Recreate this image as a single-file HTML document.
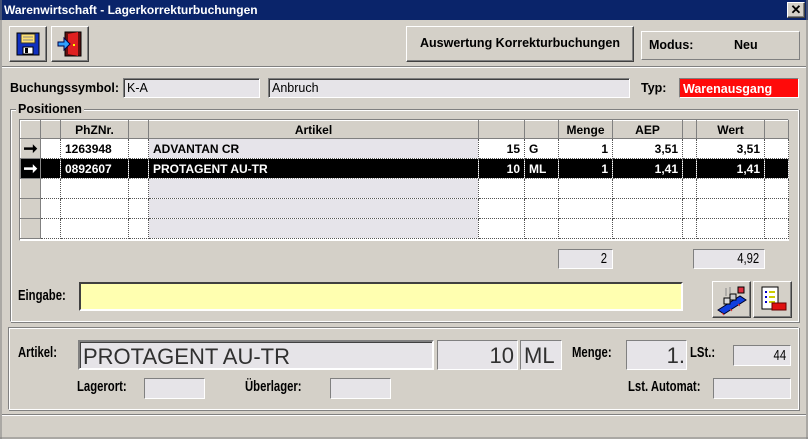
<!DOCTYPE html>
<html><head><meta charset="utf-8"><style>
*{margin:0;padding:0;box-sizing:border-box}
body{width:808px;height:439px;background:#d4d0c8;font-family:"Liberation Sans",Arial,sans-serif;font-size:12px;font-weight:bold;color:#000;position:relative;overflow:hidden}
.a{position:absolute}
.sunk{border:1px solid;border-color:#808080 #fff #fff #808080;background:#e6e4e8}
.sunk2{border:2px solid;border-color:#808080 #fff #fff #808080;box-shadow:inset 1px 1px 0 #404040}
.raised{border:1px solid;border-color:#fff #404040 #404040 #fff;box-shadow:inset -1px -1px 0 #808080;background:#d4d0c8}
.lbl{position:absolute;white-space:nowrap}
.n{display:inline-block;transform:scaleX(.78);transform-origin:left;font-size:14.5px}
table{border-collapse:collapse;position:absolute;left:20px;top:120px;table-layout:fixed}
td{height:20px;border-right:1px dotted #555;border-bottom:1px dotted #555;padding:0 4px;white-space:nowrap;overflow:hidden;font-size:12px}
tr.h td{background:#d4d0c8;border:1px solid;border-color:#fff #808080 #808080 #fff;text-align:center;height:18px}
td.ind{background:#d4d0c8;border:1px solid;border-color:#fff #808080 #808080 #fff;text-align:center;font-size:17px;line-height:14px;padding:0}
td.r{text-align:right}
td.lav{background:#e6e4ea}
tr.sel td{background:#000;color:#fff;border-color:#888}
tr.sel td.ind{background:#000;color:#fff}
</style></head><body>
<div class="a" style="left:0;top:0;width:808px;height:20px;background:#0a246a;color:#fff;font-size:12px;padding:3px 4px">Warenwirtschaft - Lagerkorrekturbuchungen</div>
<div class="a raised" style="left:787px;top:2px;width:18px;height:16px;text-align:center;font-size:13px;line-height:13px">✕</div>

<div class="a raised" style="left:9px;top:26px;width:38px;height:36px"></div>
<svg class="a" style="left:15px;top:31px" width="26" height="26" viewBox="0 0 26 26"><rect x="2" y="2" width="22" height="22" fill="#1030c0" stroke="#000"/><rect x="6" y="3" width="14" height="9" fill="#ffe070" stroke="#333"/><line x1="8" y1="6" x2="18" y2="6" stroke="#888"/><line x1="8" y1="9" x2="18" y2="9" stroke="#888"/><rect x="8" y="16" width="10" height="7" fill="#fff" stroke="#000"/><rect x="10" y="17" width="3" height="5" fill="#000"/></svg>
<div class="a raised" style="left:51px;top:26px;width:38px;height:36px"></div>
<svg class="a" style="left:56px;top:30px" width="28" height="28" viewBox="0 0 28 28"><rect x="9" y="2" width="16" height="24" fill="#601010" stroke="#000"/><polygon points="12,4 22,2 22,26 12,24" fill="#e02020"/><polygon points="2,12 8,12 8,8 14,14 8,20 8,16 2,16" fill="#30a0ff" stroke="#004"/><rect x="17" y="14" width="2" height="2" fill="#ff0"/></svg>

<div class="a raised" style="left:406px;top:26px;width:228px;height:36px;text-align:center;line-height:33px;font-size:12.5px">Auswertung Korrekturbuchungen</div>
<div class="a" style="left:641px;top:31px;width:159px;height:29px;border:1px solid;border-color:#fff #808080 #808080 #fff;line-height:26px;font-size:12.5px"><span style="margin-left:7px">Modus:</span><span style="position:absolute;left:92px">Neu</span></div>

<div class="a" style="left:2px;top:66px;width:804px;height:1px;background:#808080;box-shadow:0 1px 0 #fff"></div>

<div class="lbl" style="left:10px;top:81px;font-size:12.5px">Buchungssymbol:</div>
<div class="a sunk" style="left:123px;top:78px;width:137px;height:20px;font-weight:normal;padding:2px 3px;font-size:12.5px;box-shadow:inset 1px 1px 0 #404040">K-A</div>
<div class="a sunk" style="left:268px;top:78px;width:362px;height:20px;font-weight:normal;padding:2px 3px;font-size:12.5px;box-shadow:inset 1px 1px 0 #404040">Anbruch</div>
<div class="lbl" style="left:641px;top:81px;font-size:12.5px">Typ:</div>
<div class="a" style="left:679px;top:78px;width:120px;height:20px;background:#ff0a0a;color:#fff;padding:3px 3px;border:1px solid;border-color:#808080 #fff #fff #808080;font-size:12.5px">Warenausgang</div>

<div class="a" style="left:10px;top:109px;width:789px;height:213px;border:1px solid;border-color:#808080 #fff #fff #808080;box-shadow:inset 1px 1px 0 #fff,1px 1px 0 #808080"></div>
<div class="lbl" style="left:16px;top:102px;background:#d4d0c8;padding:0 2px;font-size:12.5px">Positionen</div>
<div class="a" style="left:19px;top:119px;width:770px;height:122px;background:#fff;border:1px solid;border-color:#808080 #fff #fff #808080"></div>
<table>
<colgroup><col style="width:20px"><col style="width:20px"><col style="width:68px"><col style="width:20px"><col style="width:330px"><col style="width:46px"><col style="width:34px"><col style="width:54px"><col style="width:70px"><col style="width:14px"><col style="width:68px"><col style="width:24px"></colgroup>
<tr class="h"><td></td><td></td><td>PhZNr.</td><td></td><td>Artikel</td><td></td><td></td><td>Menge</td><td>AEP</td><td></td><td>Wert</td><td></td></tr>
<tr><td class="ind">➞</td><td></td><td>1263948</td><td></td><td class="lav">ADVANTAN CR</td><td class="r">15</td><td>G</td><td class="r">1</td><td class="r">3,51</td><td></td><td class="r">3,51</td><td></td></tr>
<tr class="sel"><td class="ind">➞</td><td></td><td>0892607</td><td></td><td>PROTAGENT AU-TR</td><td class="r">10</td><td>ML</td><td class="r">1</td><td class="r">1,41</td><td></td><td class="r">1,41</td><td></td></tr>
<tr><td class="ind"></td><td></td><td></td><td></td><td class="lav"></td><td></td><td></td><td></td><td></td><td></td><td></td><td></td></tr>
<tr><td class="ind"></td><td></td><td></td><td></td><td class="lav"></td><td></td><td></td><td></td><td></td><td></td><td></td><td></td></tr>
<tr><td class="ind"></td><td></td><td></td><td></td><td class="lav"></td><td></td><td></td><td></td><td></td><td></td><td></td><td></td></tr>
</table>

<div class="a sunk" style="left:558px;top:249px;width:55px;height:20px;text-align:right;padding:1px 5px;font-weight:normal"><span class="n" style="transform-origin:right">2</span></div>
<div class="a sunk" style="left:693px;top:249px;width:72px;height:20px;text-align:right;padding:1px 5px;font-weight:normal"><span class="n" style="transform-origin:right">4,92</span></div>

<div class="lbl" style="left:18px;top:288px"><span class="n">Eingabe:</span></div>
<div class="a" style="left:79px;top:282px;width:604px;height:29px;background:#ffffb0;border:2px solid;border-color:#404040 #fff #fff #404040"></div>
<div class="a raised" style="left:712px;top:281px;width:39px;height:37px"></div>
<svg class="a" style="left:716px;top:284px" width="32" height="32" viewBox="0 0 32 32"><polygon points="2,26 24,12 30,16 8,30" fill="#1040e0" stroke="#002"/><rect x="8" y="14" width="6" height="6" fill="#ddd" stroke="#000"/><rect x="14" y="10" width="6" height="6" fill="#ccc" stroke="#000"/><rect x="22" y="3" width="6" height="6" fill="#e03040" stroke="#000"/><line x1="10" y1="4" x2="10" y2="12" stroke="#888"/><line x1="14" y1="3" x2="14" y2="9" stroke="#888"/><line x1="6" y1="29" x2="8" y2="31" stroke="#d33"/><line x1="14" y1="25" x2="16" y2="27" stroke="#d33"/><line x1="22" y1="20" x2="24" y2="22" stroke="#d33"/></svg>
<div class="a raised" style="left:753px;top:281px;width:39px;height:37px"></div>
<svg class="a" style="left:758px;top:285px" width="30" height="30" viewBox="0 0 30 30"><rect x="4" y="2" width="16" height="22" fill="#fff" stroke="#000"/><rect x="7" y="6" width="2" height="2" fill="#00c"/><rect x="7" y="11" width="2" height="2" fill="#00c"/><rect x="7" y="16" width="2" height="2" fill="#00c"/><line x1="11" y1="7" x2="17" y2="7" stroke="#cc0" stroke-width="2"/><line x1="11" y1="12" x2="17" y2="12" stroke="#cc0" stroke-width="2"/><line x1="11" y1="17" x2="17" y2="17" stroke="#cc0" stroke-width="2"/><rect x="14" y="18" width="14" height="7" fill="#e01010" stroke="#600"/></svg>

<div class="a" style="left:8px;top:327px;width:791px;height:83px;border:1px solid;border-color:#808080 #fff #fff #808080;box-shadow:inset 1px 1px 0 #fff,1px 1px 0 #808080"></div>
<div class="lbl" style="left:18px;top:345px"><span class="n">Artikel:</span></div>
<div class="a sunk2" style="left:78px;top:340px;width:356px;height:30px;background:#e6e4e8;font-weight:normal;font-size:22px;padding:2px 3px;color:#303030">PROTAGENT AU-TR</div>
<div class="a sunk" style="left:437px;top:340px;width:81px;height:30px;font-weight:normal;font-size:22px;text-align:right;padding:2px 3px;color:#303030">10</div>
<div class="a sunk" style="left:520px;top:340px;width:42px;height:30px;font-weight:normal;font-size:22px;padding:2px 3px;color:#303030">ML</div>
<div class="lbl" style="left:572px;top:345px"><span class="n">Menge:</span></div>
<div class="a sunk" style="left:626px;top:340px;width:61px;height:30px;font-weight:normal;font-size:22px;text-align:right;padding:2px 1px;color:#303030">1.</div>
<div class="lbl" style="left:690px;top:345px"><span class="n">LSt.:</span></div>
<div class="a sunk" style="left:733px;top:345px;width:58px;height:21px;text-align:right;padding:2px 4px;font-weight:normal"><span class="n" style="transform-origin:right">44</span></div>
<div class="lbl" style="left:77px;top:379px"><span class="n">Lagerort:</span></div>
<div class="a sunk" style="left:144px;top:378px;width:61px;height:21px"></div>
<div class="lbl" style="left:245px;top:379px"><span class="n">Überlager:</span></div>
<div class="a sunk" style="left:330px;top:378px;width:61px;height:21px"></div>
<div class="lbl" style="left:628px;top:379px"><span class="n">Lst. Automat:</span></div>
<div class="a sunk" style="left:713px;top:378px;width:78px;height:21px"></div>

<div class="a" style="left:2px;top:414px;width:804px;height:1px;background:#808080;box-shadow:0 1px 0 #fff"></div>
<div class="a" style="left:0;top:0;width:2px;height:439px;background:#808080;opacity:.5"></div>
<div class="a" style="right:0;top:0;width:2px;height:439px;background:#808080;opacity:.5"></div>
<div class="a" style="left:0;bottom:0;width:808px;height:2px;background:#808080;opacity:.5"></div>
</body></html>
